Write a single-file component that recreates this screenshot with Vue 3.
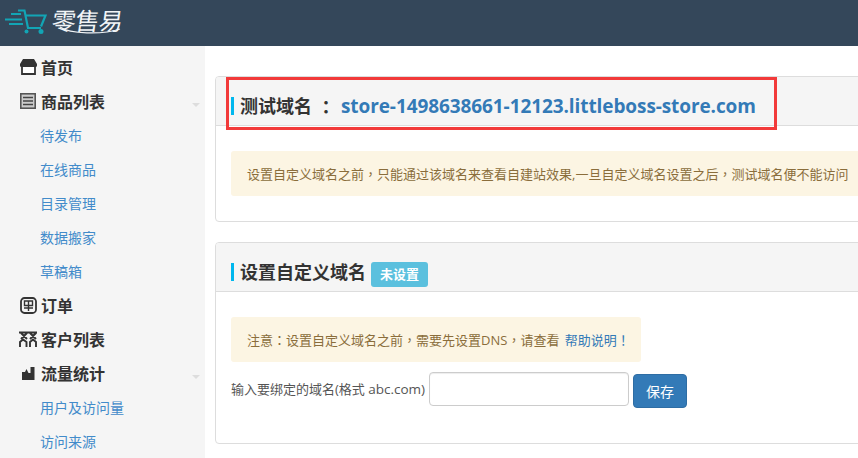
<script setup>
const nav = [
  { label: '首页', icon: 'store' },
  { label: '商品列表', icon: 'list', caret: true, children: ['待发布', '在线商品', '目录管理', '数据搬家', '草稿箱'] },
  { label: '订单', icon: 'order' },
  { label: '客户列表', icon: 'users' },
  { label: '流量统计', icon: 'chart', caret: true, children: ['用户及访问量', '访问来源'] }
]
</script>

<template>
  <div class="page">
    <header class="topbar">
      <svg class="cart" width="47" height="46" viewBox="0 0 47 46" fill="none" stroke="#12a5b5">
        <path d="M11 14H21M5 19.500H22M9 24H23" stroke-width="1.900" />
        <path d="M18 10.500H24.500L28 28H41" stroke-width="2.200" />
        <path d="M26 15.500H45.500L41 26.500" stroke-width="2.200" />
        <circle cx="26.500" cy="31.500" r="2" fill="#12a5b5" stroke="none" />
        <circle cx="41" cy="31.500" r="2.500" fill="#12a5b5" stroke="none" />
      </svg>
      <div class="logo">
        <span class="logo-text">零售易</span>
        <svg class="swoosh" width="66" height="10" viewBox="0 0 66 10" fill="none" stroke="#f2f5f7" stroke-width="1.200">
          <path d="M2 1C12 8 44 9 62 3" />
        </svg>
      </div>
    </header>

    <div class="body">
      <aside class="sidebar">
        <template v-for="item in nav" :key="item.label">
          <div class="nav-item">
            <span class="nav-icon">
              <svg v-if="item.icon === 'store'" width="17" height="16" viewBox="0 0 17 16">
                <path d="M3 0H14L17 5V6.500C17 8 15.500 8.500 14 8H3C1.500 8.500 0 8 0 6.500V5Z" fill="#333" />
                <path d="M2 8V15H15V8" fill="#fff" stroke="#333" stroke-width="1.800" />
              </svg>
              <svg v-else-if="item.icon === 'list'" width="16" height="16" viewBox="0 0 16 16">
                <rect x="0.800" y="0.800" width="14.400" height="14.400" fill="#ccc" stroke="#555" stroke-width="1.600" />
                <path d="M3 4.500H13M3 8H13M3 11.500H13" stroke="#444" stroke-width="1.500" />
              </svg>
              <svg v-else-if="item.icon === 'order'" width="17" height="17" viewBox="0 0 17 17" fill="none" stroke="#333">
                <rect x="1" y="1" width="15" height="15" rx="3.500" stroke-width="1.800" />
                <path d="M4.500 4H12.500V8.500H4.500ZM4 11H13M8.500 4V14" stroke-width="1.400" />
              </svg>
              <svg v-else-if="item.icon === 'users'" class="users" width="18" height="17" viewBox="0 0 18 17" fill="none" stroke="#333" stroke-width="1.900">
                <path d="M0 1.500H18M2 2L8 8M8 2L2 8M11 2L17 8M17 2L11 8" />
                <path d="M1 16V11L4 8.500L7.500 11V16M11 16V11L14 8.500L17 11V16" />
              </svg>
              <svg v-else class="chart" width="13" height="13" viewBox="0 0 13 13">
                <path d="M0 13V5L3 5L4.500 2L6.500 6H8.500V0H12.500V13Z" fill="#333" />
              </svg>
            </span>
            <span>{{ item.label }}</span>
            <span v-if="item.caret" class="caret"></span>
          </div>
          <a v-for="child in item.children" :key="child" class="sub-item">{{ child }}</a>
        </template>
      </aside>

      <main class="main">
        <section class="card first">
          <div class="card-head">
            <h2 class="title">测试域名<span class="colon">：</span><a class="domain">store-1498638661-12123.littleboss-store.com</a></h2>
          </div>
          <div class="card-body">
            <div class="notice wide">设置自定义域名之前<span class="p">，</span>只能通过该域名来查看自建站效果,一旦自定义域名设置之后<span class="p">，</span>测试域名便不能访问</div>
          </div>
          <div class="highlight"></div>
        </section>

        <section class="card second">
          <div class="card-head">
            <h2 class="title">设置自定义域名<span class="badge">未设置</span></h2>
          </div>
          <div class="card-body">
            <div class="notice short">注意<span class="p">：</span>设置自定义域名之前<span class="p">，</span>需要先设置DNS<span class="p">，</span>请查看 <a class="help">帮助说明<span class="p">！</span></a></div>
            <form class="bind" @submit.prevent>
              <label class="bind-label">输入要绑定的域名(格式 <span class="latin">abc.com)</span></label>
              <input class="bind-input" type="text" />
              <button class="save">保存</button>
            </form>
          </div>
        </section>
      </main>
    </div>
  </div>
</template>

<style>
html, body { margin: 0; overflow: hidden; background: #fff; }
</style>

<style scoped>
.page {
  width: 858px;
  height: 458px;
  overflow: hidden;
  font-family: "Open Sans", "Noto Sans CJK SC", sans-serif;
  color: #333;
}
.topbar {
  height: 46px;
  background: #34475a;
  display: flex;
  align-items: flex-start;
}
.cart { flex: none; }
.logo { position: relative; margin: 6px 0 0 5px; width: 74px; height: 36px; }
.logo-text {
  display: block;
  font-size: 24px;
  line-height: 30px;
  letter-spacing: -0.500px;
  color: #f2f5f7;
  transform: skewX(-8deg);
}
.swoosh { position: absolute; left: 6px; top: 20px; }
.body { display: flex; height: 412px; }
.sidebar {
  width: 205px;
  flex: none;
  background: #f5f5f5;
  padding-top: 5px;
  box-sizing: border-box;
}
.nav-item {
  height: 34px;
  display: flex;
  align-items: center;
  padding-left: 20px;
  padding-bottom: 2px;
  box-sizing: border-box;
  font-size: 16px;
  font-weight: 700;
  color: #333;
  position: relative;
}
.nav-icon {
  width: 21px;
  flex: none;
  display: flex;
  align-items: center;
}
.users { margin-left: -1px; }
.chart { margin-left: 2px; }
.caret {
  position: absolute;
  right: 5px;
  top: 18px;
  border-left: 4px solid transparent;
  border-right: 4px solid transparent;
  border-top: 4px solid #ddd;
}
.sub-item {
  display: block;
  height: 34px;
  line-height: 34px;
  padding-left: 40px;
  font-size: 14px;
  color: #428bca;
}
.main {
  flex: 1;
  min-width: 0;
  padding: 30px 0 0 10px;
  overflow: hidden;
}
.card {
  width: 660px;
  border: 1px solid #ddd;
  border-radius: 4px;
  box-sizing: border-box;
  position: relative;
}
.card.first { height: 146px; margin-bottom: 20px; }
.card.second { height: 202px; }
.card-head {
  height: 49px;
  background: #f5f5f5;
  border-bottom: 1px solid #ddd;
  border-radius: 3px 3px 0 0;
  padding: 20px 0 0 15px;
  box-sizing: border-box;
}
.title {
  margin: 0;
  height: 18px;
  font-size: 18px;
  font-weight: 700;
  line-height: 18px;
  border-left: 3px solid #00b7ee;
  padding-left: 6px;
  color: #333;
  display: flex;
  align-items: center;
  white-space: nowrap;
}
.colon { margin: 0 6px 0 5px; width: 18px; font-family: "Noto Sans CJK TC", sans-serif; }
.domain { color: #337ab7; font-size: 19px; letter-spacing: -0.090px; }
.badge {
  background: #5bc0de;
  color: #fff;
  font-size: 13px;
  font-weight: 700;
  border-radius: 3px;
  width: 57px;
  text-align: center;
  height: 25px;
  line-height: 25px;
  margin: -1px 0 -6px 5px;
}
.card-body { padding: 25px 15px 0; }
.notice {
  background: #fcf5e3;
  color: #8a6d3b;
  font-size: 13px;
  height: 45px;
  line-height: 45px;
  padding: 0 16px;
  border-radius: 3px;
  white-space: nowrap;
  box-sizing: border-box;
}
.notice.wide { width: 640px; }
.notice.short { width: 410px; }
.p { font-family: "Noto Sans CJK TC", sans-serif; }
.help { color: #337ab7; margin-left: 2px; }
.bind {
  display: flex;
  align-items: flex-start;
  margin-top: 10px;
}
.bind-label {
  width: 198px;
  flex: none;
  font-size: 13px;
  line-height: 34px;
  color: #555;
  white-space: nowrap;
}
.latin { font-size: 13.500px; }
.bind-input {
  width: 200px;
  height: 34px;
  border: 1px solid #ccc;
  border-radius: 4px;
  box-sizing: border-box;
  padding: 6px 12px;
  background: #fff;
  box-shadow: inset 0 1px 1px rgba(0,0,0,.075);
}
.save {
  margin: 2px 0 0 4px;
  width: 54px;
  height: 34px;
  background: #337ab7;
  border: 1px solid #2e6da4;
  border-radius: 4px;
  color: #fff;
  font-family: inherit;
  font-size: 14px;
  padding: 0;
}
.highlight {
  position: absolute;
  left: 10px;
  top: 0;
  width: 551px;
  height: 53px;
  border: 3px solid #f23a3a;
  box-sizing: border-box;
  pointer-events: none;
}
</style>
